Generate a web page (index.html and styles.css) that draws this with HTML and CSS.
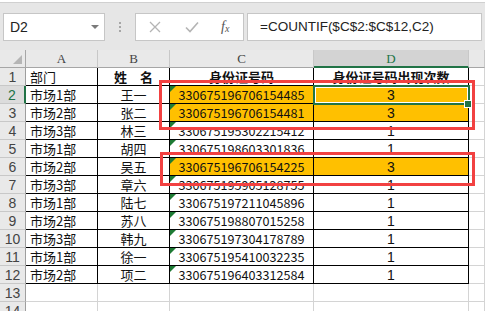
FILE: index.html
```html
<html>
<head>
<title>COUNTIF</title>
<link rel="stylesheet" href="styles.css">
</head>
<body>
<div class="wrap">

<div class="bar">
  <div class="namebox">
    <span class="name">D2</span>
    <span class="drop"></span>
  </div>
  <div class="dots"><i></i><i></i><i></i></div>
  <div class="btnbox">
    <svg class="ico" width="12" height="12" viewBox="0 0 12 12"><path d="M1 1L11 11M11 1L1 11" stroke="#b4b4b4" stroke-width="1.3" fill="none"/></svg>
    <svg class="ico" width="14" height="12" viewBox="0 0 14 12"><path d="M1 6.5L5 10.5L13 1.5" stroke="#b4b4b4" stroke-width="1.6" fill="none"/></svg>
    <span class="fx">f<sub>x</sub></span>
  </div>
  <div class="formula">=COUNTIF($C$2:$C$12,C2)</div>
</div>

<div class="gap"></div>

<div id="sheet" class="sheet"></div>

<div class="sel"></div>
<div class="handle"></div>
<div class="mark mark1"></div>
<div class="mark mark2"></div>

</div>

<script language="javascript">
let rows = [
  ["部门", "姓　名", "身份证号码", "身份证号码出现次数"],
  ["市场1部", "王一", "330675196706154485", "3"],
  ["市场2部", "张二", "330675196706154481", "3"],
  ["市场3部", "林三", "330675195302215412", "1"],
  ["市场1部", "胡四", "330675198603301836", "1"],
  ["市场2部", "吴五", "330675196706154225", "3"],
  ["市场3部", "章六", "330675195905128755", "1"],
  ["市场1部", "陆七", "330675197211045896", "1"],
  ["市场2部", "苏八", "330675198807015258", "1"],
  ["市场3部", "韩九", "330675197304178789", "1"],
  ["市场1部", "徐一", "330675195410032235", "1"],
  ["市场2部", "项二", "330675196403312584", "1"]
];

function render() {
  let html = "<div class=\"hd corner\"></div>";
  for (let l of ["A", "B", "C", "D", ""]) {
    html = html + "<div class=\"hd" + (l === "D" ? " hd-sel" : "") + "\">" + l + "</div>";
  }

  for (let r = 0; r < 14; r++) {
    let n = r + 1;
    html = html + "<div class=\"rh" + (n === 2 ? " rh-sel" : "") + "\">" + n + "</div>";
    let row = rows[r];
    if (!row) {
      html = html + "<div class=\"c\"></div>".repeat(5);
      continue;
    }
    let fill = (row[3] === "3") ? " fill" : "";
    if (r === 0) {
      html = html + "<div class=\"c b left\">" + row[0] + "</div>";
      html = html + "<div class=\"c b ctr bold\">" + row[1] + "</div>";
      html = html + "<div class=\"c b ctr bold\">" + row[2] + "</div>";
      html = html + "<div class=\"c b ctr bold\">" + row[3] + "</div>";
    } else {
      html = html + "<div class=\"c b left\">" + row[0] + "</div>";
      html = html + "<div class=\"c b ctr\">" + row[1] + "</div>";
      html = html + "<div class=\"c b ctr id tri" + fill + "\">" + row[2] + "</div>";
      html = html + "<div class=\"c b ctr val" + fill + "\">" + row[3] + "</div>";
    }
    html = html + "<div class=\"c\"></div>";
  }
  document.getElementById("sheet").innerHTML = html;
}

render();
</script>
</body>
</html>
```

FILE: styles.css
```css
body {
  margin: 0;
  overflow: hidden;
  background-color: #fff;
  font-family: "Noto Sans CJK SC", "Liberation Sans", sans-serif;
}

.wrap {
  position: relative;
  width: 485px;
  height: 311px;
  overflow: hidden;
}

/* formula bar */
.bar {
  box-sizing: border-box;
  padding: 10px 3px 0 3px;
  background-color: #e6e6e6;
  border-top: 1px solid #d0d0d0;
  margin-top: 2px;
  height: 39px;
  display: flex;
  align-items: flex-start;
  font-family: "Liberation Sans", Arial, sans-serif;
}
.namebox {
  width: 102px;
  height: 28px;
  box-sizing: border-box;
  background-color: #fff;
  border: 1px solid #c6c6c6;
  display: flex;
  align-items: center;
  justify-content: space-between;
  padding: 0 5px 0 6px;
}
.name {
  font-size: 14px;
  color: #222;
}
.drop {
  width: 0;
  height: 0;
  border-left: 4px solid transparent;
  border-right: 4px solid transparent;
  border-top: 4px solid #7a7a7a;
}
.dots {
  width: 30px;
  height: 28px;
  display: flex;
  flex-direction: column;
  align-items: center;
  justify-content: center;
  gap: 2px;
}
.dots i {
  width: 2px;
  height: 2px;
  background-color: #a6a6a6;
}
.btnbox {
  width: 109px;
  height: 28px;
  box-sizing: border-box;
  background-color: #fff;
  border: 1px solid #c6c6c6;
  display: flex;
  align-items: center;
  gap: 24px;
  padding-left: 13px;
}
.fx {
  font-family: "Liberation Serif", serif;
  font-style: italic;
  font-size: 14px;
  color: #555;
  margin-left: -2px;
}
.fx sub {
  font-size: 10px;
  vertical-align: -1px;
}
.formula {
  margin-left: 3px;
  width: 235px;
  height: 28px;
  box-sizing: border-box;
  background-color: #fff;
  border: 1px solid #c6c6c6;
  padding-left: 12px;
  font-size: 13.5px;
  line-height: 26px;
  color: #222;
}

.gap {
  height: 9px;
  background-color: #e6e6e6;
}

/* sheet grid */
.sheet {
  display: grid;
  grid-template-columns: 26px 72px 72px 144px 155px 16px;
  grid-auto-rows: 18px;
  font-size: 13px;
  color: #111;
}
.hd {
  box-sizing: border-box;
  background-color: #e9e9e9;
  border-right: 1px solid #c8c8c8;
  border-bottom: 1px solid #a6a6a6;
  text-align: center;
  font-family: "Liberation Serif", serif;
  font-size: 13px;
  line-height: 18px;
  color: #444;
}
.corner {
  position: relative;
  border-right-color: #a6a6a6;
}
.corner::after {
  content: "";
  position: absolute;
  right: 3px;
  bottom: 3px;
  border-left: 9px solid transparent;
  border-bottom: 9px solid #b5b5b5;
}
.hd-sel {
  background-color: #d3d3d3;
  border-bottom: 2px solid #217346;
  color: #217346;
}
.rh {
  box-sizing: border-box;
  background-color: #e9e9e9;
  border-right: 1px solid #9e9e9e;
  border-bottom: 1px solid #c8c8c8;
  text-align: center;
  font-family: "Liberation Sans", Arial, sans-serif;
  font-size: 14px;
  line-height: 18px;
  color: #444;
}
.rh-sel {
  background-color: #dcdcdc;
  border-right: 2px solid #217346;
  color: #217346;
}
.c {
  box-sizing: border-box;
  border-right: 1px solid #d4d4d4;
  border-bottom: 1px solid #d4d4d4;
  line-height: 17px;
  white-space: nowrap;
  overflow: hidden;
}
.b {
  border-right-color: #000;
  border-bottom-color: #000;
}
.left {
  padding-left: 4px;
}
.ctr {
  text-align: center;
}
.bold {
  font-weight: bold;
}
.id {
  font-size: 12.6px;
  line-height: 18px;
}
.val {
  font-family: "Liberation Sans", Arial, sans-serif;
  font-size: 14px;
  line-height: 18px;
}
.fill {
  background-color: #ffc000;
}
.tri {
  position: relative;
}
.tri::before {
  content: "";
  position: absolute;
  top: 0;
  left: 0;
  border-top: 6px solid #1e7b34;
  border-right: 6px solid transparent;
}

/* overlays */
.sel {
  position: absolute;
  left: 313px;
  top: 85px;
  width: 157px;
  height: 20px;
  box-sizing: border-box;
  border: 2px solid #217346;
  box-shadow: inset 0 0 0 1px #fff;
}
.handle {
  position: absolute;
  left: 465px;
  top: 101px;
  width: 6px;
  height: 6px;
  box-sizing: border-box;
  background-color: #217346;
  outline: 1px solid #fff;
}
.mark {
  position: absolute;
  box-sizing: border-box;
  border: 3px solid #f24141;
}
.mark1 {
  left: 159px;
  top: 80px;
  width: 316px;
  height: 50px;
}
.mark2 {
  left: 160px;
  top: 152px;
  width: 315px;
  height: 34px;
}
```
